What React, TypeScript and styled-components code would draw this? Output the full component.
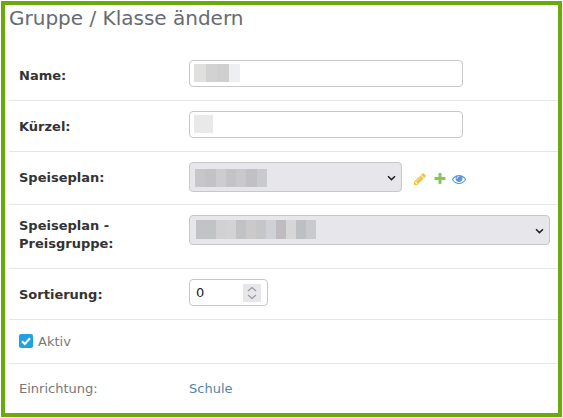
import React from "react";
import styled, { createGlobalStyle } from "styled-components";

const Global = createGlobalStyle`
  html, body { margin: 0; padding: 0; background: #fff; }
  body { font-family: "DejaVu Sans", Verdana, sans-serif; font-size: 13px; color: #333; }
`;

const Frame = styled.div`
  box-sizing: border-box;
  width: 561px;
  height: 416px;
  margin: 1px;
  border: 4px solid #6ca90c;
  padding: 0 0 0 4px;
  overflow: hidden;
`;

const Title = styled.h1`
  margin: 0;
  height: 45px;
  font-size: 20px;
  line-height: 26px;
  font-weight: 400;
  color: #666b70;
`;

const Row = styled.div<{ $h: number }>`
  box-sizing: border-box;
  height: ${(p) => p.$h}px;
  display: grid;
  grid-template-columns: 170px 1fr;
  align-items: start;
  padding: 10px 0 0 10px;
  border-bottom: 1px solid #e6e6e6;
`;

const PlainRow = styled(Row)`
  border-bottom: 0;
`;

const Label = styled.div<{ $top: number }>`
  padding-top: ${(p) => p.$top}px;
  font-weight: 700;
  line-height: 18px;
  color: #333;
`;

const SoftLabel = styled.div`
  padding-top: 7px;
  line-height: 16px;
  color: #777;
`;

const Link = styled.a`
  padding-top: 7px;
  line-height: 16px;
  color: #4f87a8;
  text-decoration: none;
`;

const Field = styled.div<{ $w: number }>`
  position: relative;
  width: ${(p) => p.$w}px;
  display: flex;
`;

const TextInput = styled.input`
  box-sizing: border-box;
  width: 100%;
  height: 27px;
  border: 1px solid #c8c8c8;
  border-radius: 4px;
  background: #fff;
  outline: none;
`;

const NumberInput = styled(TextInput)`
  padding: 0 10px 0 6px;
  font-family: "DejaVu Sans", sans-serif;
  font-size: 13px;
  color: #222;
  appearance: textfield;
  &::-webkit-inner-spin-button { appearance: none; margin: 0; }
`;

const Spinner = styled.div`
  position: absolute;
  right: 7px;
  top: 5px;
  width: 18px;
  height: 18px;
  background: #e7e7eb;
  display: flex;
  align-items: center;
  justify-content: center;
`;

const Select = styled.select`
  box-sizing: border-box;
  width: 100%;
  height: 30px;
  border: 1px solid #c8c8c8;
  border-radius: 4px;
  background-color: #e7e7eb;
  outline: none;
  appearance: none;
`;

const Chevron = styled.svg`
  position: absolute;
  right: 6px;
  top: 13px;
  pointer-events: none;
`;

const Mosaic = styled.div<{ $left: number; $top: number; $h: number }>`
  position: absolute;
  left: ${(p) => p.$left}px;
  top: ${(p) => p.$top}px;
  height: ${(p) => p.$h}px;
  display: flex;
  pointer-events: none;
`;

const Cell = styled.span<{ $c: string; $w: number }>`
  width: ${(p) => p.$w}px;
  background: ${(p) => p.$c};
`;

const SelectLine = styled.div`
  display: flex;
  align-items: flex-start;
`;

const Tools = styled.div`
  display: flex;
  align-items: center;
  gap: 5.5px;
  height: 15px;
  margin: 9px 0 0 11px;
`;

const Check = styled.span`
  box-sizing: border-box;
  width: 14px;
  height: 14px;
  border-radius: 2px;
  background: #22a1e0;
  display: flex;
  align-items: center;
  justify-content: center;
`;

const CheckRow = styled.label`
  grid-column: 1 / -1;
  display: flex;
  align-items: center;
  gap: 5px;
  height: 14px;
  margin-top: 4px;
  color: #777;
`;

type M = [string, number][];
const nameCells: M = [["#e0e0de", 12], ["#d2d2d2", 11], ["#cfcfcf", 12], ["#eeeff1", 11]];
const shortCells: M = [["#e9e9e9", 19]];
const planCells: M = [["#c7c7c9", 10], ["#c3c3c5", 11], ["#cdcdcf", 10], ["#c4c4c6", 10], ["#c9c9cd", 10], ["#c1c1c3", 11], ["#c9cacd", 10]];
const priceCells: M = [["#c2c3c4", 20], ["#d1d1d4", 10], ["#d3d3d5", 10], ["#c0c2c4", 10], ["#cbcac8", 10], ["#c4c6c8", 10], ["#cfd1d4", 10], ["#bfbcbf", 10], ["#d6d6d6", 10], ["#bdbfc1", 10], ["#c8cacd", 10]];

const Blur = ({ cells, left, top, h }: { cells: M; left: number; top: number; h: number }) => (
  <Mosaic $left={left} $top={top} $h={h}>
    {cells.map(([c, w], i) => (
      <Cell key={i} $c={c} $w={w} />
    ))}
  </Mosaic>
);

const SelectArrow = () => (
  <Chevron width="9" height="6" viewBox="0 0 9 6">
    <path d="M1 1.2 4.5 4.6 8 1.2" fill="none" stroke="#222" strokeWidth="1.5" />
  </Chevron>
);

const PencilIcon = () => (
  <svg width="14" height="14" viewBox="0 0 1792 1792" fill="#f3c344">
    <path d="M491 1536l91-91-235-235-91 91v107h128v128h107zm523-928q0-22-22-22-10 0-17 7l-542 542q-7 7-7 17 0 22 22 22 10 0 17-7l542-542q7-7 7-17zm-54-192l416 416-832 832h-416v-416zm683 96q0 53-37 90l-166 166-416-416 166-165q36-38 90-38 53 0 91 38l235 234q37 39 37 91z" />
  </svg>
);

const PlusIcon = () => (
  <svg width="14" height="14" viewBox="0 0 1792 1792" fill="#86c757">
    <path d="M1600 736v192q0 40-28 68t-68 28h-416v416q0 40-28 68t-68 28h-192q-40 0-68-28t-28-68v-416h-416q-40 0-68-28t-28-68v-192q0-40 28-68t68-28h416v-416q0-40 28-68t68-28h192q40 0 68 28t28 68v416h416q40 0 68 28t28 68z" />
  </svg>
);

const EyeIcon = () => (
  <svg width="14" height="14" viewBox="0 0 1792 1792" fill="#5b97d8">
    <path d="M1664 960q-152-236-381-353 61 104 61 225 0 185-131.5 316.5t-316.5 131.5-316.5-131.5-131.5-316.5q0-121 61-225-229 117-381 353 133 205 333.5 326.5t434.5 121.5 434.5-121.5 333.5-326.5zm-720-384q0-20-14-34t-34-14q-125 0-214.5 89.5t-89.5 214.5q0 20 14 34t34 14 34-14 14-34q0-86 61-147t147-61q20 0 34-14t14-34zm848 384q0 34-20 69-140 230-376.5 368.5t-499.5 138.5-499.5-139-376.5-368q-20-35-20-69t20-69q140-229 376.5-368t499.5-139 499.5 139 376.5 368q20 35 20 69z" />
  </svg>
);

export default function App() {
  return (
    <>
      <Global />
      <Frame>
        <Title>Gruppe / Klasse ändern</Title>
        <Row $h={51}>
          <Label $top={7}>Name:</Label>
          <Field $w={274}>
            <TextInput />
            <Blur cells={nameCells} left={5} top={4} h={18} />
          </Field>
        </Row>
        <Row $h={51}>
          <Label $top={7}>Kürzel:</Label>
          <Field $w={274}>
            <TextInput />
            <Blur cells={shortCells} left={5} top={4} h={18} />
          </Field>
        </Row>
        <Row $h={53}>
          <Label $top={7}>Speiseplan:</Label>
          <SelectLine>
            <Field $w={213}>
              <Select aria-label="Speiseplan"><option></option></Select>
              <Blur cells={planCells} left={6} top={7} h={18} />
              <SelectArrow />
            </Field>
            <Tools>
              <PencilIcon />
              <PlusIcon />
              <EyeIcon />
            </Tools>
          </SelectLine>
        </Row>
        <Row $h={64}>
          <Label $top={2}>
            Speiseplan -<br />
            Preisgruppe:
          </Label>
          <Field $w={361}>
            <Select aria-label="Preisgruppe"><option></option></Select>
            <Blur cells={priceCells} left={7} top={5} h={19} />
            <SelectArrow />
          </Field>
        </Row>
        <Row $h={51}>
          <Label $top={7}>Sortierung:</Label>
          <Field $w={79}>
            <NumberInput type="number" defaultValue={0} />
            <Spinner>
              <svg width="10" height="14" viewBox="0 0 10 14">
                <path d="M1 5 5 1.5 9 5M1 9 5 12.5 9 9" fill="none" stroke="#9a9a9e" strokeWidth="1.3" />
              </svg>
            </Spinner>
          </Field>
        </Row>
        <Row $h={44}>
          <CheckRow>
            <Check>
              <svg width="12" height="12" viewBox="0 0 12 12">
                <path d="M2 6.2 4.8 9 10 3.2" fill="none" stroke="#fff" strokeWidth="2.1" />
              </svg>
            </Check>
            Aktiv
          </CheckRow>
        </Row>
        <PlainRow $h={49}>
          <SoftLabel>Einrichtung:</SoftLabel>
          <Link href="#">Schule</Link>
        </PlainRow>
      </Frame>
    </>
  );
}
